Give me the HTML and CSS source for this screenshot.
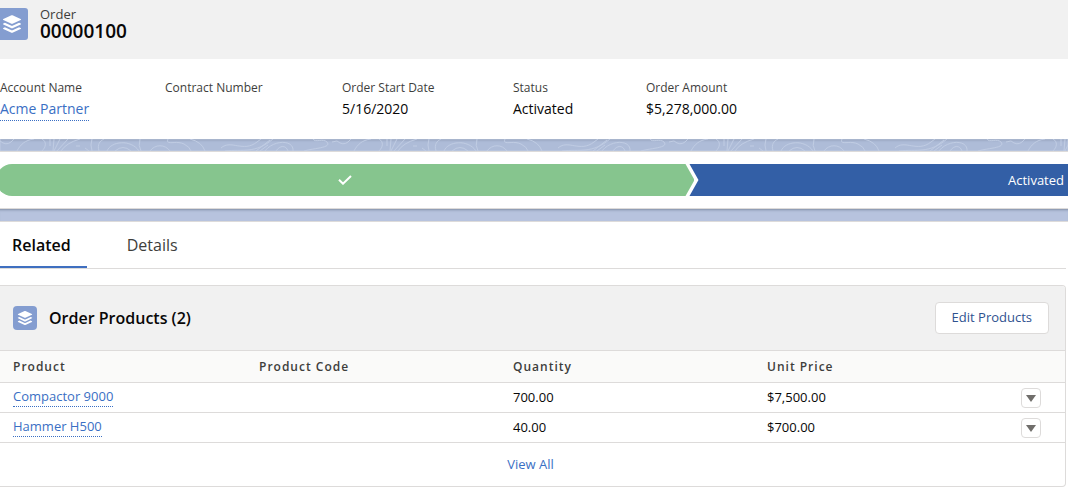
FILE: index.html
```html
<!DOCTYPE html>
<html lang="en">
<head>
<meta charset="utf-8">
<title>Order 00000100</title>
<link rel="stylesheet" href="styles.css">
</head>
<body>
<svg class="defs" aria-hidden="true">
  <symbol id="layers" viewBox="0 0 24 24">
    <path d="M12.600 1.600l9.800 4.500c.6.3.6.800 0 1.100l-9.800 4.500c-.4.2-.8.2-1.200 0L1.600 7.200c-.6-.3-.6-.8 0-1.100l9.800-4.500c.4-.2.800-.2 1.200 0z"/>
    <path d="M1.600 11.400l1.900-.9 7.900 3.700c.4.2.8.2 1.200 0l7.900-3.700 1.900.9c.6.3.6.8 0 1.100l-9.800 4.600c-.4.2-.8.2-1.200 0l-9.800-4.600c-.6-.3-.6-.8 0-1.100z"/>
    <path d="M1.600 16.800l1.900-.9 7.900 3.700c.4.2.8.2 1.200 0l7.900-3.700 1.900.9c.6.3.6.8 0 1.100l-9.800 4.600c-.4.2-.8.2-1.200 0l-9.800-4.600c-.6-.3-.6-.8 0-1.100z"/>
  </symbol>
</svg>

<header class="page-header">
  <span class="object-icon object-icon-edge"><svg class="glyph"><use href="#layers"/></svg></span>
  <div>
    <div class="object-type">Order</div>
    <h1 class="record-name">00000100</h1>
  </div>
</header>

<dl class="highlights">
  <div><dt>Account Name</dt><dd><a class="record-link" href="#">Acme Partner</a></dd></div>
  <div><dt>Contract Number</dt><dd></dd></div>
  <div><dt>Order Start Date</dt><dd>5/16/2020</dd></div>
  <div><dt>Status</dt><dd>Activated</dd></div>
  <div><dt>Order Amount</dt><dd>$5,278,000.00</dd></div>
</dl>

<div class="band">
  <svg class="contours" aria-hidden="true">
    <defs>
      <pattern id="topo" width="337" height="12" patternUnits="userSpaceOnUse">
        <path d="M0 2q6 5 11 1l3-3M17 12c3-6 8-11 17-12M42 0c5 3 4 8 0 12M50 0v7M54 0l-1 12M60 0l-6 12M68 0L57 12M80 0Q66 4 61 12M76 7h4M85 9l4 3M92 0q-2 6 0 12M99 12c-2-7 1-10 5-12M107 12c4-10 24-12 32 0M115 12q8-7 16 0M140 0q-2 7 1 12M150 12c5-7 15-7 20 0M168 0c-3 7 8 1 16 5q6 3 7 7M190 0q12 3 15 12M221 9c10-9 22 5 36-6l4-3M225 12c18-2 30 3 48-12M256 12l14-11M260 12l8-6M265 12c8-11 29-12 28 0M276 12c4-6 10-6 12 0M304 12c10-3 28-3 23-9-4-4-12 1-14-3M337 2l-5 1"/>
      </pattern>
    </defs>
    <rect width="100%" height="100%" fill="url(#topo)"/>
  </svg>
</div>

<ol class="path-card">
  <li class="stage stage-done">
    <svg class="check" viewBox="0 0 14 10" role="img" aria-label="Stage complete"><path d="M1 4.700l4 4L13 1"/></svg>
  </li>
  <li class="stage stage-current">Activated</li>
</ol>

<div class="band band-plain"></div>

<main class="content">
  <nav class="tabs">
    <a class="tab tab-active" href="#">Related</a>
    <a class="tab" href="#">Details</a>
  </nav>

  <section class="card">
    <div class="card-header">
      <span class="object-icon object-icon-small"><svg class="glyph"><use href="#layers"/></svg></span>
      <h2 class="card-title">Order Products (2)</h2>
      <button class="button" type="button">Edit Products</button>
    </div>
    <table class="products">
      <colgroup><col class="col-product"><col class="col-data"><col class="col-data"><col class="col-data"><col></colgroup>
      <thead>
        <tr><th>Product</th><th>Product Code</th><th>Quantity</th><th>Unit Price</th><th></th></tr>
      </thead>
      <tbody>
        <tr>
          <td><a class="record-link" href="#">Compactor 9000</a></td><td></td><td>700.00</td><td>$7,500.00</td>
          <td><button class="menu-button" type="button" aria-label="Actions for Compactor 9000"><svg class="arrow" viewBox="0 0 10 7"><path d="M0 0h10L5 7z"/></svg></button></td>
        </tr>
        <tr>
          <td><a class="record-link" href="#">Hammer H500</a></td><td></td><td>40.00</td><td>$700.00</td>
          <td><button class="menu-button" type="button" aria-label="Actions for Hammer H500"><svg class="arrow" viewBox="0 0 10 7"><path d="M0 0h10L5 7z"/></svg></button></td>
        </tr>
      </tbody>
    </table>
    <div class="card-footer"><a class="view-all" href="#">View All</a></div>
  </section>
</main>
</body>
</html>
```
FILE: styles.css
```css
* { box-sizing: border-box; }

body {
  margin: 0;
  background: #fff;
  color: #080707;
  font: 13px/20px "Open Sans", "Noto Sans", sans-serif;
}

h1, h2, dl, dd, ol { margin: 0; padding: 0; }
a { color: #3a6fc4; text-decoration: none; }
svg { display: block; }
.defs { position: absolute; width: 0; height: 0; }

.page-header {
  display: flex;
  gap: 12px;
  height: 59px;
  padding-top: 8px;
  background: #f1f1f1;
}

.object-icon {
  display: flex;
  align-items: center;
  justify-content: center;
  flex: none;
  border-radius: 4px;
  background: #849dd0;
}
.object-icon-edge {
  width: 28px;
  height: 32px;
  padding-right: 4px;
  border-radius: 0 3px 3px 0;
}
.object-icon-small { width: 24px; height: 24px; }
.glyph { width: 20px; height: 20px; fill: #fff; flex: none; }
.object-icon-small .glyph { width: 16px; height: 16px; }

.object-type { color: #3e3e3c; line-height: 12px; }
.record-name { font-size: 19px; font-weight: 600; line-height: 22px; }

.highlights {
  display: grid;
  grid-template-columns: 165px 177px 171px 133px 1fr;
  height: 80px;
  padding-top: 19px;
}
.highlights dt { color: #3e3e3c; font-size: 12px; }
.highlights dd { font-size: 14px; line-height: 22px; }
.record-link { display: inline-block; border-bottom: 1px dotted #3a6fc4; }

.band {
  height: 13px;
  background: #aebcd8;
  border-bottom: 1px solid #dddbda;
  box-shadow: inset 0 1px 0 #919eb6, inset 0 3px 2px -1px #9eabc5;
}
.band-plain { background: #b7c3de; }
.contours { width: 100%; height: 12px; fill: none; stroke: #c0cce3; stroke-width: 1; }

.path-card {
  display: flex;
  height: 57px;
  padding: 12px 0;
  border-bottom: 1px solid #dddbda;
  list-style: none;
  overflow: hidden;
}
.stage {
  display: flex;
  align-items: center;
  height: 32px;
  color: #fff;
}
.stage-done {
  flex: 0 0 65.4%;
  justify-content: center;
  margin: 0 -5px 0 -4px;
  border-radius: 16px 0 0 16px;
  background: #86c58e;
  clip-path: polygon(0 0, calc(100% - 9px) 0, 100% 50%, calc(100% - 9px) 100%, 0 100%);
}
.stage-current {
  flex: 1;
  justify-content: flex-end;
  padding-right: 4px;
  background: #335fa6;
  clip-path: polygon(0 0, 100% 0, 100% 100%, 0 100%, 9px 50%);
}
.check { width: 14px; height: 10px; fill: none; stroke: #fff; stroke-width: 2; }

.content { padding-right: 2px; }
.tabs {
  display: flex;
  gap: 28px;
  border-bottom: 1px solid #dddbda;
}
.tab {
  height: 46px;
  padding: 0 12px;
  color: #3e3e3c;
  font-size: 16px;
  line-height: 46px;
}
.tab-active {
  padding-right: 16px;
  border-bottom: 2px solid #3f6fc0;
  color: #080707;
  font-weight: 600;
}

.card {
  margin-top: 16px;
  border: 1px solid #dddbda;
  border-left: 0;
  border-radius: 0 4px 4px 0;
}
.card-header {
  display: flex;
  align-items: center;
  gap: 12px;
  height: 64px;
  padding: 0 16px 0 13px;
  border-radius: 0 3px 0 0;
  background: #f1f1f1;
}
.card-title { flex: 1; font-size: 16px; font-weight: 600; }
.button {
  height: 32px;
  padding: 0 16px 2px;
  border: 1px solid #dddbda;
  border-radius: 4px;
  background: #fff;
  color: #2f528f;
  font: inherit;
}

.products {
  width: 100%;
  border-collapse: collapse;
  table-layout: fixed;
}
.col-product { width: 246px; }
.col-data { width: 254px; }
.products th {
  height: 32px;
  padding: 0 0 0 13px;
  border: solid #dddbda;
  border-width: 1px 0;
  background: #fafaf9;
  color: #3e3e3c;
  font-size: 12px;
  font-weight: 600;
  letter-spacing: 1px;
  text-align: left;
}
.products td {
  height: 30px;
  padding: 0 0 2px 13px;
  border-bottom: 1px solid #dddbda;
  line-height: 20px;
}
.products td:last-child { padding-bottom: 0; }
.menu-button {
  display: flex;
  align-items: center;
  justify-content: center;
  width: 20px;
  height: 20px;
  padding: 1px 0 0;
  border: 1px solid #dddbda;
  border-radius: 4px;
  background: #fff;
}
.arrow { width: 10px; height: 7px; fill: #706e6b; }
.card-footer { padding: 11px 4px 12px 0; text-align: center; }
```
